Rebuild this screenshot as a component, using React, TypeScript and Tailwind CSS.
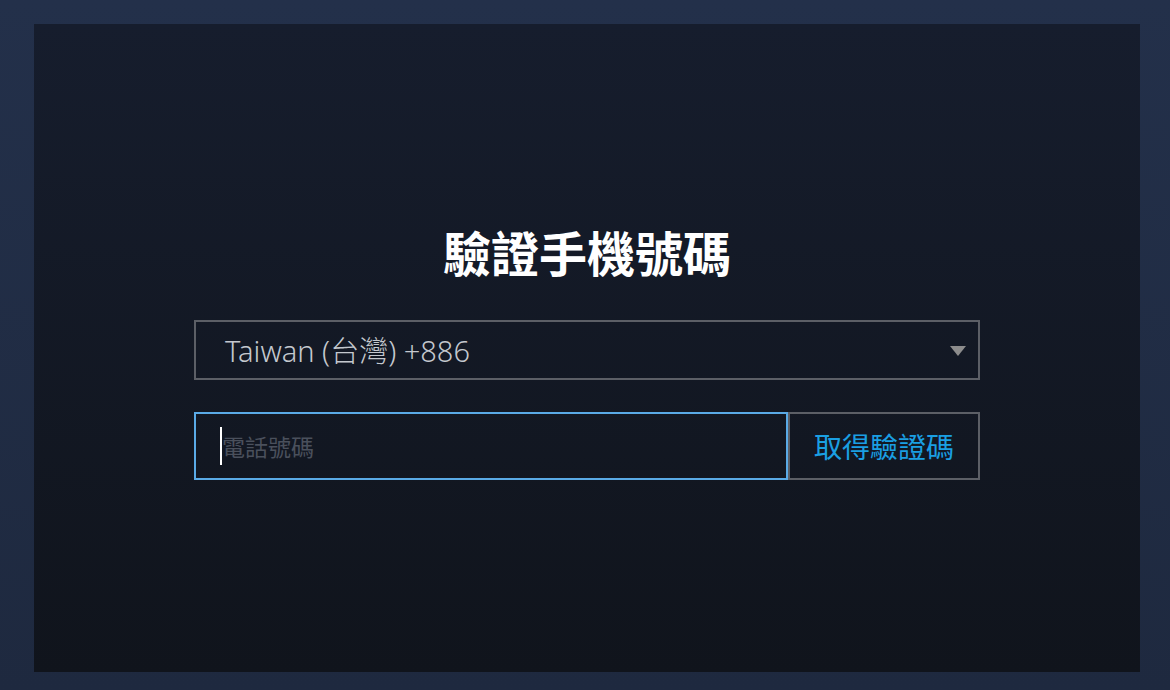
import React from "react";

export default function App() {
  return (
    <div className="w-[1170px] h-[690px] bg-gradient-to-b from-[#23304a] to-[#1e293f] pt-[24px] pl-[34px]">
      <div
        className="w-[1106px] h-[648px] bg-gradient-to-b from-[#161d2d] to-[#10141c] flex flex-col items-center pt-[198px]"
        style={{ fontFamily: '"Noto Sans", "Noto Sans CJK TC", sans-serif' }}
      >
        <h1
          className="text-[48px] leading-[58px] font-bold text-white"
          style={{ fontFamily: '"Noto Sans CJK TC", sans-serif' }}
        >
          驗證手機號碼
        </h1>
        <div className="mt-[40px] w-[786px] flex flex-col gap-[32px]">
          <div className="relative h-[60px] border-2 border-[#5c5f66] flex items-center pl-[29px]">
            <span
              className="text-[29px] font-light text-[#c4c8ce] leading-none"
              style={{ fontFamily: '"Noto Sans", "Noto Sans CJK TC", sans-serif' }}
            >
              Taiwan (台灣) +886
            </span>
            <svg
              className="absolute right-[12px] top-[24px]"
              width="16"
              height="10"
              viewBox="0 0 16 10"
            >
              <polygon points="0,0 16,0 8,10" fill="#8c8c8c" />
            </svg>
          </div>
          <div className="flex h-[68px]">
            <div className="flex-1 border-2 border-[#5aaae6] flex items-center pl-[24px]">
              <span className="w-[2px] h-[38px] bg-white"></span>
              <span
                className="text-[23px] text-[#4a505c]"
                style={{ fontFamily: '"Noto Sans CJK TC", sans-serif' }}
              >
                電話號碼
              </span>
            </div>
            <button
              className="w-[192px] border-2 border-[#5c5f66] flex items-center justify-center text-[28px] text-[#1a9fe3]"
              style={{ fontFamily: '"Noto Sans CJK TC", sans-serif' }}
            >
              取得驗證碼
            </button>
          </div>
        </div>
      </div>
    </div>
  );
}
